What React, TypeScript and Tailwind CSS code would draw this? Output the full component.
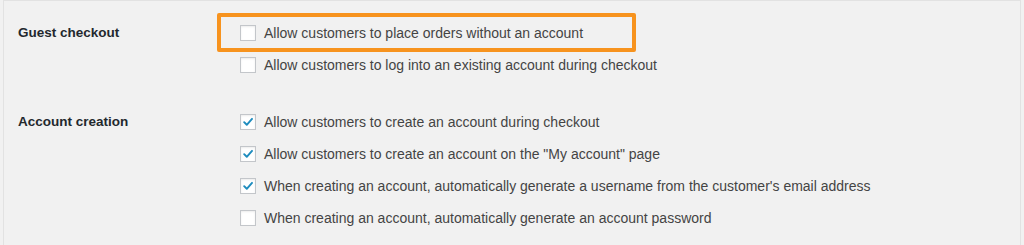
import React from 'react';

type Option = { label: string; checked: boolean; highlight?: boolean };

const groups: { title: string; options: Option[] }[] = [
  {
    title: 'Guest checkout',
    options: [
      { label: 'Allow customers to place orders without an account', checked: false, highlight: true },
      { label: 'Allow customers to log into an existing account during checkout', checked: false },
    ],
  },
  {
    title: 'Account creation',
    options: [
      { label: 'Allow customers to create an account during checkout', checked: true },
      { label: 'Allow customers to create an account on the "My account" page', checked: true },
      { label: "When creating an account, automatically generate a username from the customer's email address", checked: true },
      { label: 'When creating an account, automatically generate an account password', checked: false },
    ],
  },
];

const CheckBox: React.FC<{ checked: boolean }> = ({ checked }) => (
  <span className="relative flex h-4 w-4 shrink-0 items-center justify-center border border-[#c3c6ca] bg-white shadow-[inset_0_1px_2px_rgba(0,0,0,0.08)]">
    {checked && (
      <svg viewBox="0 0 16 16" className="h-4 w-4">
        <path d="M3.6 8.2 L6.6 11.2 L12.6 4.4" fill="none" stroke="#1e8cbe" strokeWidth="2.2" strokeLinecap="round" strokeLinejoin="round" />
      </svg>
    )}
  </span>
);

const App: React.FC = () => {
  return (
    <div className="h-[245px] w-[1024px] overflow-hidden bg-[#f1f1f1] px-[3px] font-['Liberation_Sans',Arial,sans-serif]">
      <div className="h-full border-x border-t border-[#e2e2e2] pt-[16px]">
        {groups.map((g, gi) => (
          <div key={g.title} className={gi > 0 ? 'mt-[25px] flex' : 'flex'}>
            <div className="flex h-8 w-[236px] shrink-0 items-center pl-[14px] text-[13.5px] font-bold text-[#23282d]">
              {g.title}
            </div>
            <div className="flex flex-col">
              {g.options.map((o) => (
                <div key={o.label} className="relative flex h-8 items-center gap-2 text-[14px] text-[#444]">
                  {o.highlight && (
                    <span className="absolute -left-[23px] -top-[4px] h-[39px] w-[419px] rounded-[2px] border-4 border-[#f7931e]" />
                  )}
                  <CheckBox checked={o.checked} />
                  <span>{o.label}</span>
                </div>
              ))}
            </div>
          </div>
        ))}
      </div>
    </div>
  );
};

export default App;
